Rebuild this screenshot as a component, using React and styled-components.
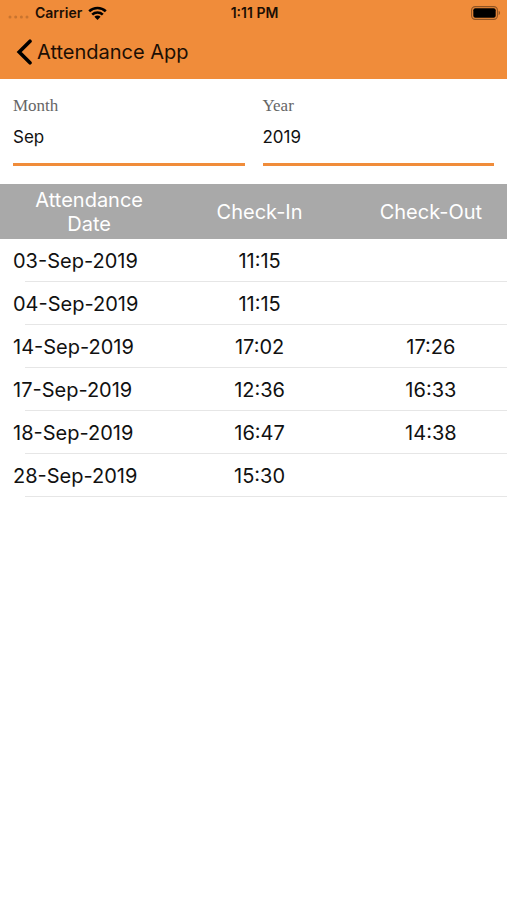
import { useState } from "react"
import styled, { createGlobalStyle } from "styled-components"

const GlobalStyle = createGlobalStyle`
    * {
        box-sizing: border-box;
    }
    body {
        margin: 0;
        background: #fff;
        color: #111;
        font-family: Inter, "Liberation Sans", sans-serif;
    }
`
const Header = styled.header`
    height: 79px;
    background: #f08c3a;
    color: #1c0f04;
`
const StatusBar = styled.div`
    display: grid;
    grid-template-columns: 1fr auto 1fr;
    align-items: center;
    height: 25px;
    padding: 0 6px 0 8px;
    font-size: 14px;
    font-weight: 600;
`
const Carrier = styled.div`
    display: flex;
    align-items: center;
    gap: 6px;
`
const Battery = styled.svg`
    justify-self: end;
`
const BackButton = styled.button`
    display: flex;
    align-items: center;
    gap: 5px;
    height: 54px;
    padding: 0 15px;
    border: 0;
    background: none;
    color: inherit;
    font: inherit;
    font-size: 20px;
    cursor: pointer;
`
const Filters = styled.form`
    display: grid;
    grid-template-columns: 1fr 1fr;
    gap: 18px;
    padding: 17px 13px 18px;
`
const Field = styled.div`
    display: flex;
    flex-direction: column;
    border-bottom: 3px solid #f08c3a;
`
const Label = styled.label`
    color: #666;
    font-family: "Liberation Serif", serif;
    font-size: 17px;
    line-height: 20px;
`
const Select = styled.select`
    appearance: none;
    width: 100%;
    height: 47px;
    padding: 0 0 6px;
    border: 0;
    background: none;
    color: inherit;
    font-family: inherit;
    font-size: 17px;
`
const Table = styled.table`
    width: 100%;
    border-collapse: collapse;
    table-layout: fixed;
    font-size: 20px;
    line-height: 24px;
    text-align: center;
`
const HeadRow = styled.tr`
    height: 55px;
    background: #a9a9a9;
    color: #fff;
`
const Row = styled.tr`
    height: 43px;
    background: linear-gradient(#e6e6e6, #e6e6e6) 25px 100% / 100% 1px no-repeat;
`
const HeadCell = styled.th`
    width: ${({ $width }) => $width};
    padding: ${({ $padding }) => $padding};
    font-weight: 400;
`
const Cell = styled.td`
    padding: ${({ $padding }) => $padding};
    text-align: ${({ $align }) => $align || "center"};
`

const months = ["Jan", "Feb", "Mar", "Apr", "May", "Jun", "Jul", "Aug", "Sep", "Oct", "Nov", "Dec"]
const years = ["2018", "2019", "2020"]

const columns = [
    { key: "date", title: "Attendance Date", width: "34%", padding: "0 7px 0 13px", align: "left" },
    { key: "checkIn", title: "Check-In", width: "34%", padding: "0 0 0 2px" },
    { key: "checkOut", title: "Check-Out", width: "32%", padding: "0 0 0 10px" },
]

const records = [
    { date: "03-Sep-2019", checkIn: "11:15", checkOut: "" },
    { date: "04-Sep-2019", checkIn: "11:15", checkOut: "" },
    { date: "14-Sep-2019", checkIn: "17:02", checkOut: "17:26" },
    { date: "17-Sep-2019", checkIn: "12:36", checkOut: "16:33" },
    { date: "18-Sep-2019", checkIn: "16:47", checkOut: "14:38" },
    { date: "28-Sep-2019", checkIn: "15:30", checkOut: "" },
]

const SignalIcon = () => (
    <svg width="21" height="14" viewBox="0 0 21 14" fill="#c8742f" aria-hidden="true">
        <circle cx="2" cy="11" r="1.5" />
        <circle cx="7.7" cy="11" r="1.5" />
        <circle cx="13.4" cy="11" r="1.5" />
        <circle cx="19" cy="11" r="1.5" />
    </svg>
)

const WifiIcon = () => (
    <svg width="19" height="14" viewBox="0 0 19 14" fill="none" stroke="#000" strokeWidth="2.6" aria-hidden="true">
        <path d="M1.2 5.3 A12 12 0 0 1 17.8 5.3" />
        <path d="M4.2 8.6 A7.7 7.7 0 0 1 14.8 8.6" />
        <path d="M9.5 13.9 L6.4 10.8 A4.4 4.4 0 0 1 12.6 10.8 Z" fill="#000" stroke="none" />
    </svg>
)

const BatteryIcon = () => (
    <Battery width="30" height="14" viewBox="0 0 30 14" aria-hidden="true">
        <rect x="0.6" y="0.6" width="25.8" height="12.8" rx="3.6" fill="none" stroke="#8f5323" strokeWidth="1.1" />
        <rect x="2.3" y="2.3" width="22.4" height="9.4" rx="2" fill="#000" />
        <path d="M27.6 4.8 A2.4 2.4 0 0 1 27.6 9.2 Z" fill="#8f5323" />
    </Battery>
)

const ChevronIcon = () => (
    <svg width="17" height="26" viewBox="0 0 17 26" fill="none" stroke="#000" strokeWidth="3.6" strokeLinecap="round" strokeLinejoin="miter" aria-hidden="true">
        <path d="M15 2.2 L4.2 13 L15 23.8" />
    </svg>
)

const Picker = ({ id, label, options, value, onChange }) => (
    <Field>
        <Label htmlFor={id}>{label}</Label>
        <Select id={id} value={value} onChange={(e) => onChange(e.target.value)}>
            {options.map((option) => (
                <option key={option}>{option}</option>
            ))}
        </Select>
    </Field>
)

const App = () => {
    const [month, setMonth] = useState("Sep")
    const [year, setYear] = useState("2019")
    return (
        <>
            <GlobalStyle />
            <Header>
                <StatusBar>
                    <Carrier>
                        <SignalIcon />
                        <span>Carrier</span>
                        <WifiIcon />
                    </Carrier>
                    <span>1:11 PM</span>
                    <BatteryIcon />
                </StatusBar>
                <BackButton type="button">
                    <ChevronIcon />
                    Attendance App
                </BackButton>
            </Header>
            <main>
                <Filters>
                    <Picker id="month" label="Month" options={months} value={month} onChange={setMonth} />
                    <Picker id="year" label="Year" options={years} value={year} onChange={setYear} />
                </Filters>
                <Table>
                    <thead>
                        <HeadRow>
                            {columns.map(({ key, title, width, padding }) => (
                                <HeadCell key={key} scope="col" $width={width} $padding={padding}>{title}</HeadCell>
                            ))}
                        </HeadRow>
                    </thead>
                    <tbody>
                        {records.map((record) => (
                            <Row key={record.date}>
                                {columns.map(({ key, padding, align }) => (
                                    <Cell key={key} $padding={padding} $align={align}>{record[key]}</Cell>
                                ))}
                            </Row>
                        ))}
                    </tbody>
                </Table>
            </main>
        </>
    )
}

export default App
